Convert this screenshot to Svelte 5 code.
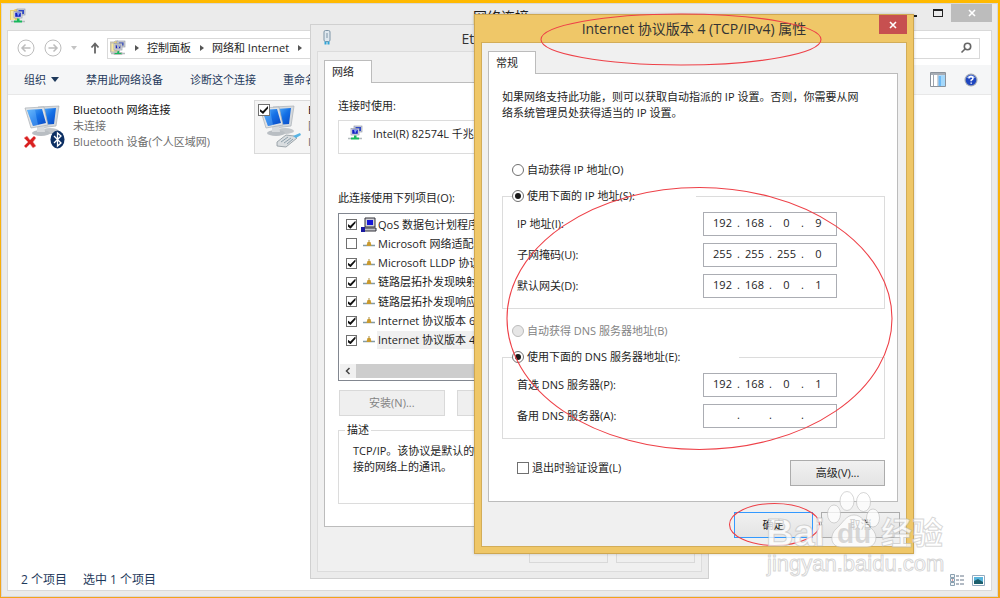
<script>
  const menu = ['禁用此网络设备', '诊断这个连接', '重命名此连接'];

  let items = $state([
    { name: 'QoS 数据包计划程序', checked: true, kind: 'pc' },
    { name: 'Microsoft 网络适配器', checked: false },
    { name: 'Microsoft LLDP 协议', checked: true },
    { name: '链路层拓扑发现映射器', checked: true },
    { name: '链路层拓扑发现响应程序', checked: true },
    { name: 'Internet 协议版本 6', checked: true },
    { name: 'Internet 协议版本 4', checked: true, selected: true }
  ]);

  let addresses = $state([
    { label: 'IP 地址(I):', parts: ['192', '168', '0', '9'] },
    { label: '子网掩码(U):', parts: ['255', '255', '255', '0'] },
    { label: '默认网关(D):', parts: ['192', '168', '0', '1'] }
  ]);

  let servers = $state([
    { label: '首选 DNS 服务器(P):', parts: ['192', '168', '0', '1'] },
    { label: '备用 DNS 服务器(A):', parts: ['', '', '', ''] }
  ]);

  let ipMode = $state('manual');
  let dnsMode = $state('manual');
  let validate = $state(false);
</script>

{#snippet netIcon(folder)}
  <svg class="icon16" viewBox="0 0 16 16" aria-hidden="true">
    {#if folder}
      <path d="M0 2h4l1-1h3v11H0z" fill="#e9cf6b" />
      <path d="M1 3h4v9H1z" fill="#f8ea9f" />
    {/if}
    <rect x="7" y="1" width="8" height="6" fill="#cfd3dc" stroke="#8d93a6" stroke-width=".6" />
    <rect x="8.5" y="2" width="5.5" height="4" fill="#3048c8" />
    <rect x="4" y="3.5" width="8" height="6.5" fill="#dfe3ea" stroke="#8d93a6" stroke-width=".6" />
    <rect x="5.2" y="4.6" width="5.6" height="4.2" fill="#1420c0" />
    <path d="M7 5h3l-2 3.5z" fill="#7f9cf5" />
    <path d="M7 10.500h2.500v2H12v2H4v-2h3z" fill="#18b85c" />
    <path d="M1 13.500h3M12 13.500h3" stroke="#b5bcbf" stroke-width="1.500" />
  </svg>
{/snippet}

{#snippet monitors(kind)}
  <svg class="monitors" viewBox="0 0 44 46" aria-hidden="true">
    <defs>
      <linearGradient id="screen-{kind}" x1="0" y1="0" x2="1" y2="1">
        <stop offset="0" stop-color="#5db4fb" />
        <stop offset=".5" stop-color="#1470e6" />
        <stop offset="1" stop-color="#0b49c4" />
      </linearGradient>
    </defs>
    <ellipse cx="26" cy="27" rx="9" ry="3" fill="#c3c7cb" />
    <path d="M14 3l21-1-3 20-16 2z" fill="#d5d9dd" stroke="#a9afb5" stroke-width=".7" />
    <path d="M17 5l15-1-2 16-13 1z" fill="url(#screen-{kind})" />
    <ellipse cx="17" cy="29" rx="9" ry="3" fill="#b9bec3" />
    <path d="M13 22l7-1 1 7h-8z" fill="#d7dadd" />
    <path d="M1 4l19-1 4 18-17 3z" fill="#dfe2e5" stroke="#a9afb5" stroke-width=".7" />
    <path d="M3 6l15-1 4 14-13 3z" fill="url(#screen-{kind})" />
    <path d="M3 6l8-.6 3 15.600-5 1z" fill="#79c1ff" opacity=".4" />
    {#if kind === 'bt'}
      <path d="M0 34l3-2 3 4 4-4 2 2-3 4 3 4-3 2-3-4-4 4-2-2 4-4z" fill="#d92020" stroke="#f3a0a0" stroke-width=".5" />
      <ellipse cx="33.500" cy="35.500" rx="7" ry="9" fill="#0c2f63" />
      <path d="M30 32l7 7-3.500 3V29l3.500 3-7 7" fill="none" stroke="#fff" stroke-width="1.300" />
    {:else}
      <path d="M18 38l9-7 8 1 3 2-11 9-9-1z" fill="#d9dde0" stroke="#8c959c" stroke-width=".8" />
      <path d="M22 38l7-5M25 39l7-5M28 40l6-5" stroke="#8498a5" stroke-width=".9" />
      <path d="M34 32l7-3 1 2-5 3z" fill="#58b4e4" />
    {/if}
  </svg>
{/snippet}

{#snippet cross()}
  <svg class="cross" viewBox="0 0 8 8" aria-hidden="true"><path d="M1 1l6 6M7 1L1 7" /></svg>
{/snippet}

{#snippet ipRow(row)}
  <div class="ip-row">
    <span>{row.label}</span>
    <div class="ip-box" role="group" aria-label={row.label}>
      {#each row.parts as _, i}
        <input class="octet" type="text" maxlength="3" aria-label="{row.label} {i + 1}" bind:value={row.parts[i]} />
        {#if i < 3}<span class="dot">.</span>{/if}
      {/each}
    </div>
  </div>
{/snippet}

<div class="desktop">
  <main class="explorer">
    <header class="explorer-title">
      {@render netIcon(true)}
      <h1>网络连接</h1>
      <div class="window-buttons">
        <button class="win-btn" aria-label="最小化"><span class="min-mark"></span></button>
        <button class="win-btn" aria-label="最大化"><span class="max-mark"></span></button>
        <button class="win-btn win-close" aria-label="关闭">{@render cross()}</button>
      </div>
    </header>

    <div class="explorer-body">
      <nav class="nav">
        <button class="round" aria-label="后退">
          <svg viewBox="0 0 18 18"><circle cx="9" cy="9" r="8" /><path d="M13.500 9H5M8.500 5.500L5 9l3.500 3.500" /></svg>
        </button>
        <button class="round" aria-label="前进">
          <svg viewBox="0 0 18 18"><circle cx="9" cy="9" r="8" /><path d="M4.500 9H13M9.500 5.500L13 9l-3.500 3.500" /></svg>
        </button>
        <span class="caret caret-light"></span>
        <button class="up" aria-label="上移">
          <svg viewBox="0 0 10 12"><path d="M5 11.500V1.500M1.500 5.500L5 1.500l3.500 4" /></svg>
        </button>
        <div class="address">
          {@render netIcon(true)}
          <span class="crumb-arrow"></span>
          <a href="#panel">控制面板</a>
          <span class="crumb-arrow"></span>
          <a href="#network">网络和 Internet</a>
          <span class="crumb-arrow"></span>
        </div>
        <div class="search">
          <input type="text" aria-label="搜索" />
          <svg viewBox="0 0 12 12" aria-hidden="true"><circle cx="7.500" cy="4.500" r="3.200" /><path d="M5 7L1.500 10.500" /></svg>
        </div>
      </nav>

      <div class="toolbar">
        <button>组织<span class="caret"></span></button>
        {#each menu as entry}
          <button>{entry}</button>
        {/each}
        <div class="toolbar-right">
          <button aria-label="预览窗格">
            <svg width="16" height="15" viewBox="0 0 16 15">
              <path d="M.5.5h15v14H.5z" fill="#fff" stroke="#8b929b" />
              <path d="M1 1h14v2H1z" fill="#a7adb5" />
              <path d="M3.500 3v11M8 3v11" stroke="#a0a6ae" />
              <path d="M8.500 3.500H15V14H8.500z" fill="#6db9f5" />
              <path d="M11 3.500h4V14h-4z" fill="#a4d8fb" />
            </svg>
          </button>
          <button aria-label="帮助">
            <svg width="14" height="14" viewBox="0 0 14 14">
              <circle cx="7" cy="7" r="6.500" fill="#9ea6b4" />
              <circle cx="7" cy="7" r="5.300" fill="#1f46c0" />
              <path d="M2.500 5a5 5 0 0 1 9 0z" fill="#7d9bea" />
              <path d="M5 5.500Q5 3.500 7 3.500t2 1.800Q9 6.500 7.200 7.200V8.300M7.200 9.500v1.300" fill="none" stroke="#fff" stroke-width="1.500" />
            </svg>
          </button>
        </div>
      </div>

      <div class="files">
        <div class="file">
          {@render monitors('bt')}
          <div class="file-text">
            <strong>Bluetooth 网络连接</strong>
            <span>未连接</span>
            <span>Bluetooth 设备(个人区域网)</span>
          </div>
        </div>
        <div class="file chosen">
          <input class="file-check" type="checkbox" checked aria-label="Ethernet0" />
          {@render monitors('lan')}
          <div class="file-text">
            <strong>Ethernet0</strong>
            <span>网络</span>
            <span>Intel(R)</span>
          </div>
        </div>
      </div>

      <footer class="status">
        <span>2 个项目</span>
        <span>选中 1 个项目</span>
        <div class="views">
          <svg width="14" height="12" viewBox="0 0 14 12" aria-hidden="true">
            <path d="M.5.500h4v3h-4zM.5 4.500h4v3h-4zM.5 8.500h4v3h-4z" fill="#f2f5f7" stroke="#8aa0b0" />
            <path d="M2 6h1" stroke="#d04040" />
            <path d="M6 2h3M10 2h4M6 6h3M10 6h4M6 10h3M10 10h4" stroke="#667789" />
          </svg>
          <svg width="13" height="11" viewBox="0 0 13 11" aria-hidden="true">
            <path d="M.5.500h12v10H.5z" fill="#fff" stroke="#93abc0" />
            <path d="M2 2h9v7H2z" fill="#58b5dd" />
            <path d="M2 6l4-2 5 3v2H2z" fill="#1b5f6d" />
          </svg>
        </div>
      </footer>
    </div>
  </main>

  <section class="dialog ethernet" aria-label="Ethernet0 属性">
    <header class="dialog-title">
      <svg class="plug" viewBox="0 0 10 16" aria-hidden="true">
        <rect x="2" y=".5" width="6" height="11" rx="1.500" fill="#dfe8ef" stroke="#7f95a7" />
        <path d="M5 3v5" stroke="#7f95a7" />
        <path d="M3.500 11.500v3M6.500 11.500v3" stroke="#2fa3d6" stroke-width="2" />
      </svg>
      <h2>Ethernet0 属性</h2>
    </header>
    <div class="dialog-body">
      <button class="tab">网络</button>
      <div class="panel">
        <p>连接时使用:</p>
        <div class="adapter">{@render netIcon(false)}<span>Intel(R) 82574L 千兆网络</span></div>
        <p>此连接使用下列项目(O):</p>
        <div class="list">
          <div class="list-rows">
            {#each items as item}
              <label class="list-row">
                <input type="checkbox" bind:checked={item.checked} />
                {#if item.kind === 'pc'}
                  <svg class="row-icon" viewBox="0 0 16 16" aria-hidden="true">
                    <path d="M4 1h10v9H4z" fill="#d0d0d6" stroke="#33333b" />
                    <path d="M6 3h6v5H6z" fill="#1616d8" />
                    <path d="M3 11h12v3H3z" fill="#c5c5cb" stroke="#33333b" />
                    <path d="M0 10h4v5H0z" fill="#1a1aa0" />
                  </svg>
                {:else}
                  <svg class="row-icon" viewBox="0 0 16 16" aria-hidden="true">
                    <path d="M2 9.500h12" stroke="#829aa5" stroke-width="1.500" />
                    <path d="M8 4v3" stroke="#a98b3c" />
                    <path d="M5.500 10l1-4h3l1 4z" fill="#c99a2e" />
                  </svg>
                {/if}
                <span class="row-name" class:selected={item.selected}>{item.name}</span>
              </label>
            {/each}
          </div>
          <div class="scroll">
            <svg viewBox="0 0 6 8" aria-hidden="true"><path d="M4.500 1L1.500 4l3 3" /></svg>
            <div class="thumb"></div>
          </div>
        </div>
        <div class="list-buttons">
          <button class="btn" disabled>安装(N)...</button>
          <button class="btn" disabled>卸载(U)</button>
          <button class="btn" disabled>属性(R)</button>
        </div>
        <fieldset class="about">
          <legend>描述</legend>
          <p>TCP/IP。该协议是默认的<br />接的网络上的通讯。</p>
        </fieldset>
      </div>
      <div class="actions">
        <button class="btn" disabled>确定</button>
        <button class="btn" disabled>取消</button>
      </div>
    </div>
  </section>

  <section class="dialog ipv4" aria-label="Internet 协议版本 4 (TCP/IPv4) 属性">
    <header class="dialog-title">
      <h2>Internet 协议版本 4 (TCP/IPv4) 属性</h2>
      <button class="red-close" aria-label="关闭">{@render cross()}</button>
    </header>
    <div class="dialog-body">
      <button class="tab">常规</button>
      <div class="panel">
        <p>如果网络支持此功能，则可以获取自动指派的 IP 设置。否则，你需要从网<br />络系统管理员处获得适当的 IP 设置。</p>

        <label class="choice choice-first">
          <input type="radio" name="ip" value="auto" bind:group={ipMode} />自动获得 IP 地址(O)
        </label>
        <fieldset class="group">
          <legend>
            <label class="choice">
              <input type="radio" name="ip" value="manual" bind:group={ipMode} />使用下面的 IP 地址(S):
            </label>
          </legend>
          {#each addresses as row}
            {@render ipRow(row)}
          {/each}
        </fieldset>

        <label class="choice choice-dns off">
          <input type="radio" name="dns" value="auto" disabled bind:group={dnsMode} />自动获得 DNS 服务器地址(B)
        </label>
        <fieldset class="group">
          <legend class="wide">
            <label class="choice">
              <input type="radio" name="dns" value="manual" bind:group={dnsMode} />使用下面的 DNS 服务器地址(E):
            </label>
          </legend>
          {#each servers as row}
            {@render ipRow(row)}
          {/each}
        </fieldset>

        <div class="extra">
          <label><input type="checkbox" bind:checked={validate} />退出时验证设置(L)</label>
          <button class="btn">高级(V)...</button>
        </div>
      </div>
      <div class="actions">
        <button class="btn primary">确定</button>
        <button class="btn">取消</button>
      </div>
    </div>
  </section>

  <svg class="marks" width="1000" height="598" viewBox="0 0 1000 598" aria-hidden="true">
    <g fill="none" stroke="#ee4148" stroke-width="1.100">
      <ellipse cx="681" cy="39.500" rx="140" ry="25.500" />
      <ellipse cx="699.500" cy="318.500" rx="192.500" ry="131" />
      <ellipse cx="774.500" cy="524.500" rx="45" ry="21" />
    </g>
    <g class="watermark">
      <text x="766" y="546" font-size="38">Bai</text>
      <g class="paw">
        <ellipse cx="834" cy="514" rx="6.500" ry="9" />
        <ellipse cx="847" cy="501" rx="7" ry="9.500" />
        <ellipse cx="863.500" cy="502" rx="7" ry="9.500" />
        <ellipse cx="873" cy="518" rx="6.500" ry="9" />
        <path d="M854 515c8 0 11 8 18 14 7 7 4 18-5 18h-26c-10 0-12-11-5-18 7-6 10-14 18-14z" />
      </g>
      <text class="du" x="837" y="543" font-size="28">du</text>
      <text x="881" y="544" font-size="31">经验</text>
      <text class="site" x="767" y="571" font-size="22">jingyan.baidu.com</text>
    </g>
  </svg>
</div>

<style>
  :global(body) {
    margin: 0;
  }

  .desktop {
    position: relative;
    display: flex;
    min-height: 100vh;
    padding: 3px 2px 1px 1px;
    box-sizing: border-box;
    overflow: hidden;
    background: linear-gradient(#ffb900, #f3a31a);
    color: #1e1e1e;
    font: 11px/16px 'Open Sans', 'Noto Sans CJK SC', sans-serif;
  }

  .desktop :global(*) {
    box-sizing: border-box;
  }

  h1,
  h2,
  p {
    margin: 0;
    font-weight: normal;
  }

  h1,
  h2 {
    font-size: 14px;
    line-height: 20px;
    white-space: nowrap;
  }

  button,
  input {
    margin: 0;
    padding: 0;
    border: none;
    background: none;
    color: inherit;
    font: inherit;
  }

  fieldset {
    margin: 0;
    padding: 0;
    min-width: 0;
    border: 1px solid #dcdcdc;
  }

  legend {
    padding: 0;
  }

  .icon16 {
    width: 16px;
    height: 16px;
    flex: none;
  }

  .cross {
    display: block;
    width: 8px;
    height: 8px;
    margin: auto;
    fill: none;
    stroke: #fff;
    stroke-width: 1.6;
  }

  /* explorer window */
  .explorer {
    flex: 1;
    display: flex;
    flex-direction: column;
    min-width: 0;
    padding: 0 5px 5px;
    border: 1px solid #d8d8d8;
    background: #ebebeb;
  }

  .explorer-title {
    display: grid;
    grid-template-columns: 1fr auto 1fr;
    height: 26px;
    padding-left: 3px;
  }

  .explorer-title .icon16 {
    margin-top: 4px;
  }

  .explorer-title h1 {
    margin-top: 3px;
  }

  .window-buttons {
    display: flex;
    justify-content: flex-end;
  }

  .win-btn {
    display: grid;
    place-items: center;
    width: 26px;
    height: 18px;
  }

  .win-close {
    width: 41px;
    background: #bcbcbc;
  }

  .min-mark {
    width: 10px;
    height: 2px;
    margin-top: 6px;
    background: #222;
  }

  .max-mark {
    width: 10px;
    height: 8px;
    border: 1px solid #222;
    border-top-width: 2px;
  }

  .explorer-body {
    flex: 1;
    display: flex;
    flex-direction: column;
    border: 1px solid #d9d9d9;
    background: #fff;
  }

  .nav {
    display: flex;
    align-items: center;
    height: 34px;
    padding: 0 11px 0 9px;
  }

  .nav svg {
    display: block;
    fill: none;
    stroke: #bdbdbd;
  }

  .round {
    width: 18px;
    height: 18px;
    margin-right: 9px;
  }

  .round path {
    stroke-width: 1.5;
  }

  .caret {
    display: inline-block;
    border: 4px solid transparent;
    border-top: 5px solid #1e395b;
    border-bottom: none;
  }

  .caret-light {
    border-width: 3px;
    border-top: 4px solid #c4c4c4;
    border-bottom: none;
  }

  .up {
    width: 10px;
    height: 12px;
    margin: 0 7px 0 13px;
  }

  .nav .up svg {
    stroke: #666;
    stroke-width: 1.8;
  }

  .address {
    flex: 1;
    display: flex;
    align-items: center;
    height: 21px;
    padding-left: 2px;
    border: 1px solid #d9d9d9;
  }

  .address a {
    color: #1e1e1e;
    text-decoration: none;
  }

  .crumb-arrow {
    margin: 0 8px 0 9px;
    border: 3px solid transparent;
    border-left: 4px solid #555;
    border-right: none;
  }

  .search {
    display: flex;
    align-items: center;
    width: 170px;
    height: 21px;
    margin-left: 8px;
    padding-right: 7px;
    border: 1px solid #d9d9d9;
  }

  .search input {
    flex: 1;
    min-width: 0;
  }

  .nav .search svg {
    width: 12px;
    height: 12px;
    stroke: #666;
    stroke-width: 1.6;
  }

  .toolbar {
    display: flex;
    align-items: center;
    gap: 27px;
    height: 30px;
    padding: 0 13px 0 16px;
    border-bottom: 1px solid #e8e8e8;
    background: #f5f6f7;
    color: #1e395b;
  }

  .toolbar .caret {
    margin: 0 0 2px 5px;
  }

  .toolbar-right {
    display: flex;
    gap: 18px;
    margin-left: auto;
  }

  .toolbar-right svg {
    display: block;
  }

  .files {
    flex: 1;
    display: flex;
    align-items: flex-start;
    gap: 2px;
    padding: 5px 0 0 11px;
  }

  .file {
    position: relative;
    display: flex;
    width: 233px;
    height: 54px;
    padding: 1px 0 0 4px;
    border: 1px solid transparent;
  }

  .chosen {
    width: 200px;
    border-color: #dadada;
    background: #f5f5f5;
  }

  .monitors {
    flex: none;
    width: 44px;
    height: 46px;
    margin-top: 2px;
  }

  .file-check[type='checkbox'] {
    position: absolute;
    top: 3px;
    left: 3px;
  }

  .file-text {
    display: flex;
    flex-direction: column;
    padding-left: 5px;
    overflow: hidden;
    color: #6d6d6d;
    white-space: nowrap;
  }

  .file-text strong {
    color: #111;
    font-weight: normal;
  }

  .status {
    display: flex;
    align-items: center;
    gap: 16px;
    height: 20px;
    padding: 0 6px 0 13px;
    color: #1e395b;
    font-size: 12px;
  }

  .views {
    display: flex;
    align-items: center;
    gap: 8px;
    margin-left: auto;
  }

  /* form controls */
  input[type='checkbox'],
  input[type='radio'] {
    appearance: none;
    display: grid;
    place-items: center;
    flex: none;
    width: 12px;
    height: 12px;
    border: 1px solid #707070;
    background: #fff;
  }

  input[type='radio'] {
    border-radius: 50%;
  }

  input[type='checkbox']:checked::before {
    content: '';
    width: 8px;
    height: 8px;
    background: #111;
    clip-path: polygon(0 40%, 35% 65%, 100% 0, 100% 30%, 38% 100%, 0 70%);
  }

  input[type='radio']:checked::before {
    content: '';
    width: 6px;
    height: 6px;
    border-radius: 50%;
    background: #1a1a1a;
  }

  input[type='radio']:disabled {
    border-color: #bcbcbc;
    background: #e6e6e6;
  }

  .btn {
    width: 79px;
    height: 26px;
    border: 1px solid #acacac;
    background: linear-gradient(#f1f1f1, #e4e4e4);
  }

  .btn:disabled {
    border-color: #d9d9d9;
    background: #efefef;
    color: #838383;
  }

  .btn.primary {
    border-color: #3399ff;
  }

  /* dialogs float on the desktop */
  .dialog {
    position: absolute;
    padding: 0 6px 6px;
    border: 1px solid #d0d0d0;
    background: #ebebeb;
  }

  .dialog-title {
    display: grid;
    grid-template-columns: 1fr auto 1fr;
  }

  .dialog-title h2 {
    grid-column: 2;
    margin-top: 4px;
    color: #333;
  }

  .dialog-body {
    padding: 8px 6px;
    border: 1px solid #dcdcdc;
    background: #f0f0f0;
  }

  .tab {
    position: relative;
    z-index: 1;
    display: block;
    width: 48px;
    height: 23px;
    margin-bottom: -1px;
    padding-left: 7px;
    border: 1px solid #bcbcbc;
    border-bottom: none;
    background: #fff;
    text-align: left;
  }

  .panel {
    margin-right: 2px;
    padding: 15px 12px 15px 13px;
    border: 1px solid #bcbcbc;
    background: #fff;
  }

  .actions {
    display: flex;
    justify-content: flex-end;
    gap: 8px;
    margin-top: 10px;
  }

  .ethernet {
    top: 24px;
    left: 310px;
    width: 399px;
  }

  .ethernet .dialog-title {
    height: 26px;
  }

  .plug {
    width: 10px;
    height: 16px;
    margin: 5px 0 0 5px;
  }

  .ethernet .panel {
    padding-bottom: 22px;
  }

  .ethernet .btn {
    padding-bottom: 8px;
    line-height: 12px;
  }

  .adapter {
    display: flex;
    gap: 10px;
    height: 34px;
    margin: 6px 0 36px;
    padding: 4px 8px;
    border: 1px solid #dcdcdc;
  }

  .adapter span {
    margin-top: 1px;
  }

  .list {
    height: 168px;
    margin: 7px 0 9px;
    padding: 1px;
    border: 1px solid #828790;
  }

  .list-rows {
    display: grid;
    grid-template-rows: repeat(7, 1fr);
    height: 135px;
    margin-bottom: 14px;
    overflow: hidden;
  }

  .list-row {
    display: flex;
    align-items: center;
    padding-left: 6px;
    white-space: nowrap;
  }

  .list-row input[type='checkbox'] {
    width: 11px;
    height: 11px;
  }

  .row-icon {
    width: 16px;
    height: 16px;
    margin-left: 4px;
  }

  .row-name {
    flex: 1;
    padding: 1px;
  }

  .selected {
    background: #f0f0f0;
  }

  .scroll {
    display: flex;
    align-items: center;
    height: 14px;
    background: #f0f0f0;
  }

  .scroll svg {
    width: 6px;
    height: 8px;
    margin: 0 5px;
    fill: none;
    stroke: #444;
    stroke-width: 1.5;
  }

  .thumb {
    width: 270px;
    height: 14px;
    background: #cdcdcd;
  }

  .list-buttons {
    display: flex;
    justify-content: space-between;
    gap: 12px;
    margin: 0 0 6px 1px;
  }

  .ethernet .list-buttons .btn {
    width: 106px;
    padding: 0;
  }

  .about {
    padding: 5px 0 28px 14px;
    overflow: hidden;
  }

  .about legend {
    margin-left: -8px;
    padding: 0 2px;
  }

  .about p {
    white-space: nowrap;
  }

  .ipv4 {
    top: 14px;
    left: 474px;
    width: 440px;
    border-color: #cfa74f;
    background: #efc768;
    box-shadow: 0 0 3px rgba(0, 0, 0, 0.2);
  }

  .ipv4 .dialog-title {
    height: 27px;
  }

  .ipv4 .dialog-body {
    border-color: #d3ad58;
  }

  .red-close {
    justify-self: end;
    width: 28px;
    height: 19px;
    background: #c75050;
  }

  .choice {
    display: flex;
    align-items: center;
    gap: 3px;
    padding-left: 10px;
  }

  .choice-first {
    margin: 41px 0 10px;
  }

  .choice-dns {
    margin: 14px 0 10px;
  }

  .off {
    color: #838383;
  }

  .group {
    display: block;
    padding: 8px 47px 10px 14px;
  }

  .group legend {
    width: 184px;
    margin-left: -5px;
  }

  .group .wide {
    width: 227px;
  }

  .group .choice {
    padding: 0;
  }

  .ip-row {
    display: flex;
    justify-content: space-between;
    align-items: center;
  }

  .ip-row + .ip-row {
    margin-top: 7px;
  }

  .ip-box {
    display: flex;
    width: 134px;
    height: 24px;
    padding: 2px 0 0 6px;
    border: 1px solid #abadb3;
    background: #fff;
  }

  .octet {
    width: 25px;
    height: 16px;
    text-align: center;
  }

  .dot {
    width: 7px;
    text-align: center;
  }

  .extra {
    display: flex;
    justify-content: space-between;
    align-items: flex-start;
    margin-top: 21px;
  }

  .extra label {
    display: flex;
    align-items: center;
    gap: 3px;
    padding-left: 15px;
  }

  .extra .btn {
    width: 95px;
  }

  /* red pen circles and the site watermark */
  .marks {
    position: absolute;
    top: 0;
    left: 0;
    pointer-events: none;
  }

  .watermark text,
  .paw {
    fill: rgba(255, 255, 255, 0.75);
    stroke: rgba(180, 180, 180, 0.55);
    stroke-width: 1;
    font-family: 'Liberation Sans', 'Noto Sans CJK SC', sans-serif;
    font-weight: bold;
  }

  .watermark .du {
    fill: rgba(205, 205, 205, 0.8);
    stroke: none;
  }

  .watermark .site {
    font-weight: normal;
  }
</style>
